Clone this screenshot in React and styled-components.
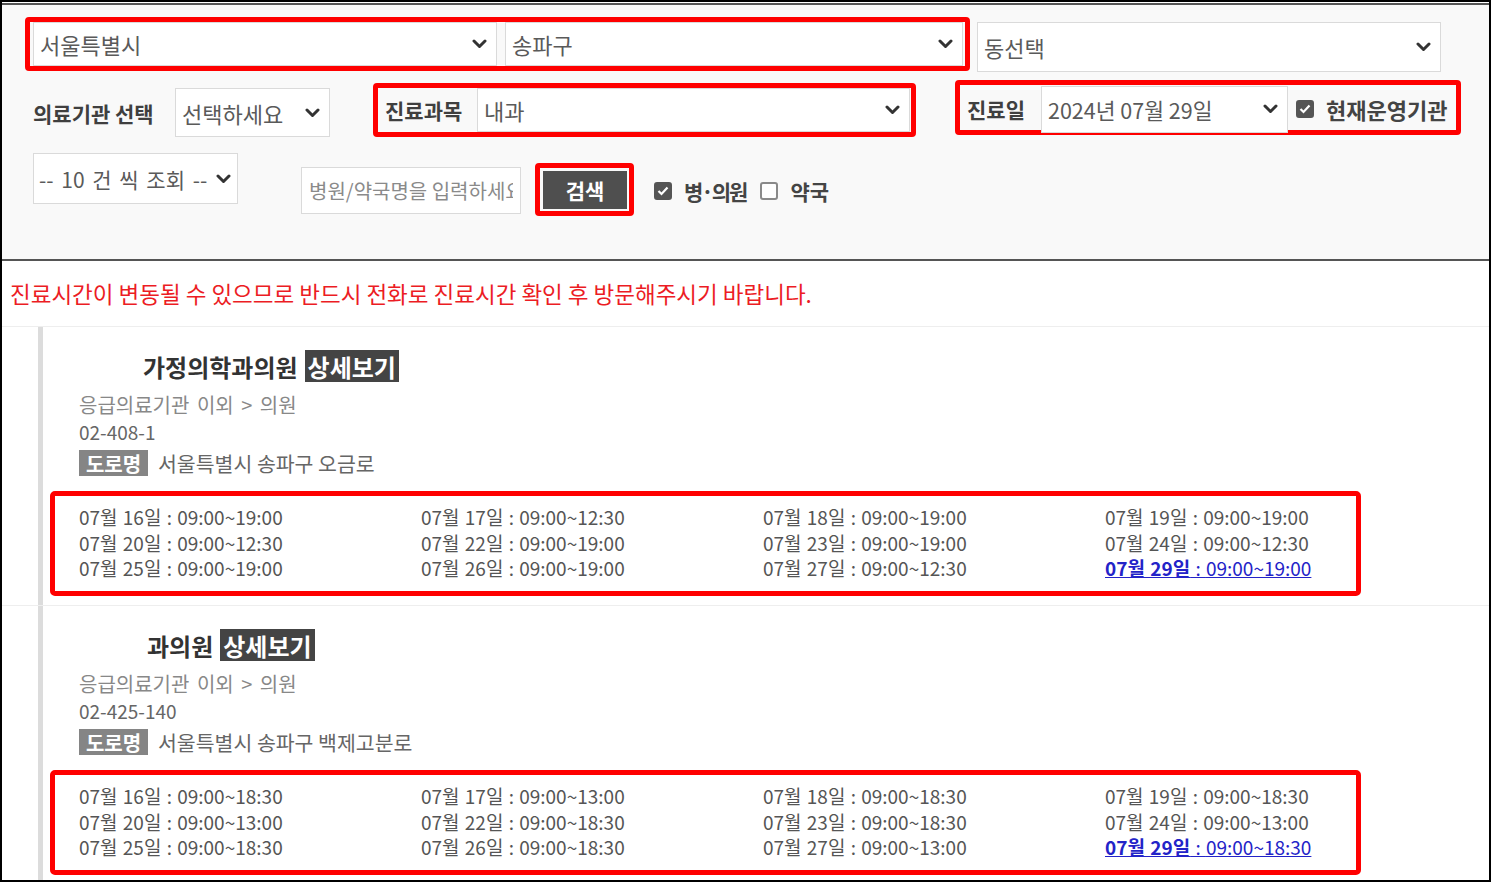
import React from "react";
import styled, { createGlobalStyle } from "styled-components";

const GlobalStyle = createGlobalStyle`
  html, body { margin: 0; padding: 0; background: #fff; }
  body { font-family: "Noto Sans CJK KR", "Noto Sans", sans-serif; }
  * { box-sizing: border-box; }
`;

const Frame = styled.div`
  width: 1491px;
  height: 882px;
  overflow: hidden;
  border: 2px solid #000;
  background: #fff;
  display: flex;
  flex-direction: column;
`;

const FilterPanel = styled.div`
  margin-top: 1px;
  border-top: 2px solid #555;
  border-bottom: 2px solid #555;
  background: #f9f9f9;
  padding: 12px 0 43px 23px;
  display: flex;
  flex-direction: column;
  flex-shrink: 0;
`;

const Row = styled.div`
  display: flex;
  align-items: flex-start;
  margin-top: ${(p) => p.$mt || 0}px;
`;

const RedBox = styled.div`
  flex-shrink: 0;
  display: flex;
  align-items: center;
  width: ${(p) => p.$w}px;
  height: ${(p) => p.$h}px;
  border: 5px solid #ff0000;
  border-radius: 4px;
  padding: ${(p) => p.$pad || "0"};
  gap: ${(p) => p.$gap || 0}px;
  margin-top: ${(p) => p.$mt || 0}px;
  margin-left: ${(p) => p.$ml || 0}px;
`;

const SelectBox = styled.div`
  flex-shrink: 0;
  display: flex;
  align-items: center;
  justify-content: space-between;
  width: ${(p) => p.$w}px;
  height: ${(p) => p.$h}px;
  margin-top: ${(p) => p.$mt || 0}px;
  margin-left: ${(p) => p.$ml || 0}px;
  background: #fff;
  border: 1px solid #dadada;
  padding: 0 ${(p) => p.$pr ?? 9}px 0 ${(p) => p.$pl ?? 6}px;
  font-size: ${(p) => p.$fs || 22}px;
  word-spacing: ${(p) => p.$ws || 0}px;
  color: #5a5a5a;
  white-space: nowrap;
  overflow: hidden;
`;

const FieldLabel = styled.span`
  flex-shrink: 0;
  width: ${(p) => (p.$w ? `${p.$w}px` : "auto")};
  font-size: 21px;
  font-weight: 700;
  color: #3f3f3f;
  line-height: 30px;
  white-space: nowrap;
  margin-top: ${(p) => p.$mt || 0}px;
  margin-left: ${(p) => p.$ml || 0}px;
`;

const SearchInput = styled.input`
  flex-shrink: 0;
  width: 220px;
  height: 47px;
  margin-top: 14px;
  margin-left: 63px;
  border: 1px solid #dadada;
  background: #fff;
  padding: 0 7px;
  font-family: "Noto Sans CJK KR", sans-serif;
  font-size: 20px;
  color: #555;
  outline: none;
  &::placeholder { color: #8a8a8a; }
`;

const SearchButton = styled.button`
  width: 84px;
  height: 38px;
  border: none;
  background: #4f4f4f;
  color: #fff;
  font-family: "Noto Sans CJK KR", sans-serif;
  font-size: 21px;
  font-weight: 700;
  padding: 0;
  margin: 3px 0 0 3px;
  align-self: flex-start;
`;

const CheckItem = styled.label`
  flex-shrink: 0;
  display: flex;
  align-items: center;
  gap: 12px;
  height: 24px;
  margin-top: ${(p) => p.$mt || 0}px;
  margin-left: ${(p) => p.$ml || 0}px;
  font-size: ${(p) => p.$fs || 21}px;
  font-weight: 700;
  color: #444;
  white-space: nowrap;
`;

const CheckText = styled.span`
  letter-spacing: ${(p) => p.$ls || 0}px;
`;

const Box = styled.span`
  flex-shrink: 0;
  width: 18px;
  height: 18px;
  border-radius: 3px;
  border: 2px solid ${(p) => (p.$checked ? "#555" : "#8a8a8a")};
  background: ${(p) => (p.$checked ? "#555" : "#fff")};
  display: flex;
  align-items: center;
  justify-content: center;
`;

const Notice = styled.div`
  flex-shrink: 0;
  padding: 17px 8px 18px;
  line-height: 30px;
  font-size: 22.5px;
  color: #ec1c24;
  border-bottom: 1px solid #eee;
  white-space: nowrap;
`;

const ListItem = styled.div`
  flex-shrink: 0;
  border-bottom: 1px solid #eee;
`;

const Card = styled.div`
  margin-left: 36px;
  border-left: 5px solid #dcdcdc;
  padding: 23px 0 9px 7px;
`;

const Info = styled.div`
  padding-left: 29px;
  display: flex;
  flex-direction: column;
`;

const TitleRow = styled.div`
  display: flex;
  align-items: center;
  height: 32px;
`;

const Redacted = styled.span`
  display: inline-block;
  flex-shrink: 0;
  width: ${(p) => p.$w}px;
`;

const TitleText = styled.span`
  font-size: 24px;
  font-weight: 700;
  color: #333;
  white-space: nowrap;
`;

const DetailTag = styled.span`
  margin-left: 7px;
  height: 32px;
  display: flex;
  align-items: center;
  padding: 0 3px;
  background: #444;
  color: #fff;
  font-size: 24px;
  font-weight: 700;
  white-space: nowrap;
`;

const InfoLine = styled.div`
  font-size: ${(p) => p.$fs || 20}px;
  line-height: 27px;
  word-spacing: ${(p) => p.$ws || 0}px;
  color: ${(p) => p.$color || "#777"};
  margin-top: ${(p) => p.$mt || 0}px;
  white-space: nowrap;
`;

const AddressRow = styled.div`
  display: flex;
  align-items: center;
  gap: 10px;
  margin-top: 5px;
  height: 26px;
`;

const RoadBadge = styled.span`
  width: 69px;
  height: 26px;
  display: flex;
  align-items: center;
  justify-content: center;
  background: #858585;
  color: #fff;
  font-size: 20px;
  font-weight: 700;
`;

const AddressText = styled.span`
  font-size: 20.5px;
  color: #666;
  white-space: nowrap;
`;

const Schedule = styled.div`
  margin-top: 15px;
  width: 1311px;
  height: 105px;
  border: 5px solid #ff0000;
  border-radius: 5px;
  padding: 8px 0 0 24px;
  display: grid;
  grid-template-columns: 342px 342px 342px 1fr;
  align-content: start;
  line-height: 25.5px;
  font-size: 19px;
  word-spacing: 1px;
  color: #555;
`;

const Slot = styled.span`
  white-space: nowrap;
`;

const TodaySlot = styled.span`
  white-space: nowrap;
  color: #2323c8;
  text-decoration: underline;
  b { font-weight: 700; }
`;

const Chevron = () => (
  <svg width="15" height="10" viewBox="0 0 15 10">
    <path d="M2 2 L7.5 7.5 L13 2" stroke="#333" strokeWidth="3" fill="none" strokeLinecap="round" strokeLinejoin="round" />
  </svg>
);

const Select = ({ children, ...rest }) => (
  <SelectBox {...rest}>
    <span>{children}</span>
    <Chevron />
  </SelectBox>
);

const Check = ({ checked }) => (
  <Box $checked={checked}>
    {checked && (
      <svg width="12" height="10" viewBox="0 0 12 10">
        <path d="M1.5 5 L4.5 8 L10.5 1.5" stroke="#fff" strokeWidth="2.2" fill="none" />
      </svg>
    )}
  </Box>
);

const items = [
  {
    redact: 64,
    name: "가정의학과의원",
    phone: "02-408-1",
    address: "서울특별시 송파구 오금로",
    slots: [
      ["07월 16일", "09:00~19:00"], ["07월 17일", "09:00~12:30"], ["07월 18일", "09:00~19:00"], ["07월 19일", "09:00~19:00"],
      ["07월 20일", "09:00~12:30"], ["07월 22일", "09:00~19:00"], ["07월 23일", "09:00~19:00"], ["07월 24일", "09:00~12:30"],
      ["07월 25일", "09:00~19:00"], ["07월 26일", "09:00~19:00"], ["07월 27일", "09:00~12:30"], ["07월 29일", "09:00~19:00", true],
    ],
  },
  {
    redact: 68,
    name: "과의원",
    phone: "02-425-140",
    address: "서울특별시 송파구 백제고분로",
    slots: [
      ["07월 16일", "09:00~18:30"], ["07월 17일", "09:00~13:00"], ["07월 18일", "09:00~18:30"], ["07월 19일", "09:00~18:30"],
      ["07월 20일", "09:00~13:00"], ["07월 22일", "09:00~18:30"], ["07월 23일", "09:00~18:30"], ["07월 24일", "09:00~13:00"],
      ["07월 25일", "09:00~18:30"], ["07월 26일", "09:00~18:30"], ["07월 27일", "09:00~13:00"], ["07월 29일", "09:00~18:30", true],
    ],
  },
];

export default function App() {
  return (
    <>
      <GlobalStyle />
      <Frame>
        <FilterPanel>
          <Row>
            <RedBox $w={945} $h={54} $pad="0 1px 0 3px" $gap={8}>
              <Select $w={464} $h={44}>서울특별시</Select>
              <Select $w={458} $h={44}>송파구</Select>
            </RedBox>
            <Select $w={464} $h={50} $mt={5} $ml={7}>동선택</Select>
          </Row>
          <Row $mt={8}>
            <FieldLabel $w={126} $mt={18} $ml={8}>의료기관 선택</FieldLabel>
            <Select $w={155} $h={49} $mt={8} $ml={16}>선택하세요</Select>
            <RedBox $w={543} $h={54} $mt={3} $ml={43} $pad="0 1px 0 7px" $gap={14}>
              <FieldLabel $w={78}>진료과목</FieldLabel>
              <Select $w={433} $h={44}>내과</Select>
            </RedBox>
            <RedBox $w={506} $h={55} $ml={39} $pad="3px 0 0 7px">
              <FieldLabel $w={60}>진료일</FieldLabel>
              <Select $w={247} $h={47} $ml={14} $fs={21.5}>2024년 07월 29일</Select>
              <CheckItem $ml={8} $fs={22}>
                <Check checked />
                현재운영기관
              </CheckItem>
            </RedBox>
          </Row>
          <Row $mt={16}>
            <Select $w={205} $h={51} $ml={8} $pr={6} $pl={5} $fs={21} $ws={3}>-- 10 건 씩 조회 --</Select>
            <SearchInput placeholder="병원/약국명을 입력하세요" />
            <RedBox $w={99} $h={53} $mt={10} $ml={14}>
              <SearchButton>검색</SearchButton>
            </RedBox>
            <CheckItem $mt={26} $ml={20}>
              <Check checked />
              <CheckText $ls={-2}>병·의원</CheckText>
            </CheckItem>
            <CheckItem $mt={26} $ml={14}>
              <Check />
              <CheckText>약국</CheckText>
            </CheckItem>
          </Row>
        </FilterPanel>
        <Notice>진료시간이 변동될 수 있으므로 반드시 전화로 진료시간 확인 후 방문해주시기 바랍니다.</Notice>
        {items.map((it, i) => (
          <ListItem key={i}>
            <Card>
              <Info>
                <TitleRow>
                  <Redacted $w={it.redact} />
                  <TitleText>{it.name}</TitleText>
                  <DetailTag>상세보기</DetailTag>
                </TitleRow>
                <InfoLine $mt={9} $color="#888" $ws={3}>응급의료기관 이외 &gt; 의원</InfoLine>
                <InfoLine $color="#666" $fs={19}>{it.phone}</InfoLine>
                <AddressRow>
                  <RoadBadge>도로명</RoadBadge>
                  <AddressText>{it.address}</AddressText>
                </AddressRow>
              </Info>
              <Schedule>
                {it.slots.map(([d, t, today], j) =>
                  today ? (
                    <TodaySlot key={j}>
                      <b>{d}</b> : {t}
                    </TodaySlot>
                  ) : (
                    <Slot key={j}>
                      {d} : {t}
                    </Slot>
                  )
                )}
              </Schedule>
            </Card>
          </ListItem>
        ))}
      </Frame>
    </>
  );
}
